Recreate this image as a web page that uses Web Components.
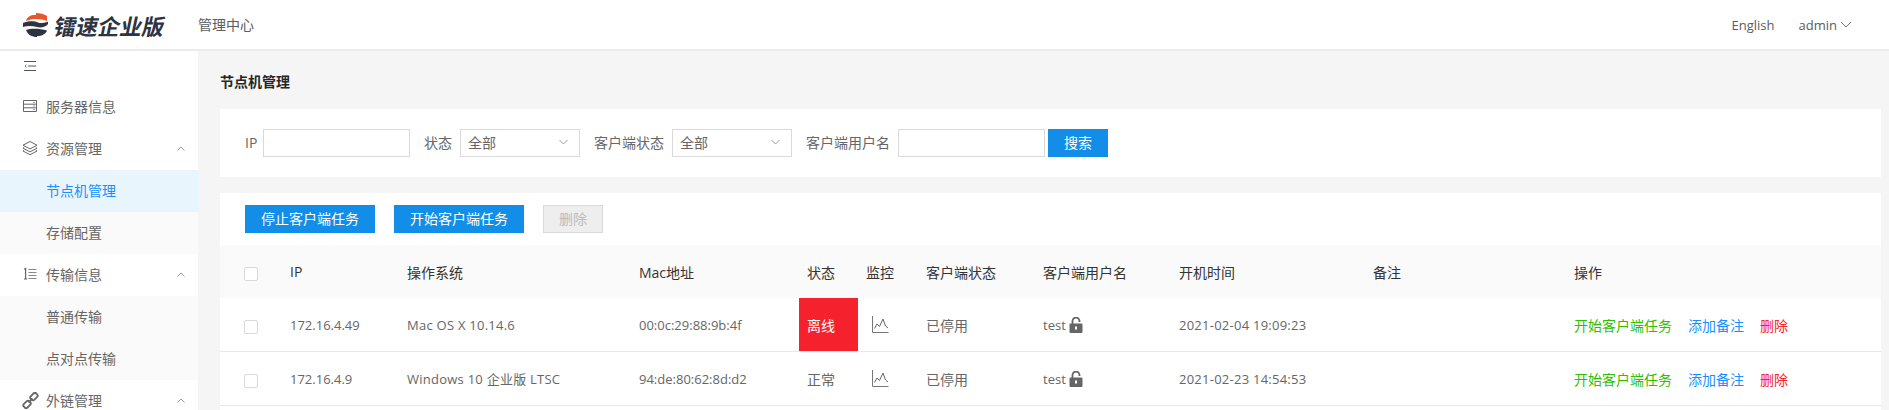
<!DOCTYPE html>
<html lang="zh">
<head>
<meta charset="utf-8">
<title>节点机管理</title>
<style>
  html, body { margin: 0; height: 100%; overflow: hidden; }
  body {
    background: #f5f5f5;
    font-family: "Open Sans", "Noto Sans CJK SC", sans-serif;
    font-size: 14px;
    color: #666;
  }
  #app { display: flex; flex-direction: column; height: 100vh; }
  #body { display: flex; flex: 1; min-height: 0; }
</style>
</head>
<body>
<div id="app">
  <rs-header></rs-header>
  <div id="body">
    <rs-sidebar>
      <rs-collapse></rs-collapse>
      <rs-nav-item icon="server">服务器信息</rs-nav-item>
      <rs-nav-item icon="layers" arrow>资源管理</rs-nav-item>
      <rs-nav-item sub active>节点机管理</rs-nav-item>
      <rs-nav-item sub>存储配置</rs-nav-item>
      <rs-nav-item icon="list" arrow>传输信息</rs-nav-item>
      <rs-nav-item sub>普通传输</rs-nav-item>
      <rs-nav-item sub>点对点传输</rs-nav-item>
      <rs-nav-item icon="link" arrow>外链管理</rs-nav-item>
    </rs-sidebar>
    <rs-page title="节点机管理">
      <rs-filter-bar></rs-filter-bar>
      <rs-node-table>
        <rs-node-row ip="172.16.4.49" os="Mac OS X 10.14.6" mac="00:0c:29:88:9b:4f" status="离线" offline client="已停用" user="test" boot="2021-02-04 19:09:23"></rs-node-row>
        <rs-node-row ip="172.16.4.9" os="Windows 10 企业版 LTSC" mac="94:de:80:62:8d:d2" status="正常" client="已停用" user="test" boot="2021-02-23 14:54:53"></rs-node-row>
      </rs-node-table>
    </rs-page>
  </div>
</div>

<script>
const icons = {
  server: '<svg width="16" height="16" viewBox="0 0 16 16" fill="none" stroke="#666"><path d="M1.5 2.5h13v11h-13zM1.5 6.2h13M1.5 9.8h13"/><path d="M11 4.4h2M11 8h2M11 11.6h2" stroke="#999"/></svg>',
  layers: '<svg width="16" height="16" viewBox="0 0 16 16" fill="none" stroke="#666"><path d="M8 1.5l7 3.7-7 3.7-7-3.7z"/><path d="M2.2 7.4L1 8.2l7 3.7 7-3.7-1.2-.8"/><path d="M2.2 10.2L1 11l7 3.7 7-3.7-1.2-.8"/></svg>',
  list: '<svg width="16" height="16" viewBox="0 0 16 16" fill="none" stroke="#666"><path d="M6.5 3.5h8M6.5 6.5h8M6.5 9.5h8M6.5 12.5h8" stroke="#888"/><path d="M2 3.2L3.6 2.5V13M2 13h3.2" stroke-width="1.2"/></svg>',
  link: '<svg width="17" height="17" viewBox="0 0 17 17" fill="none" stroke="#666" stroke-width="1.8"><rect x="8.2" y="2" width="7.5" height="5" rx="1.6" transform="rotate(-45 12 4.5)"/><rect x="1.3" y="10" width="7.5" height="5" rx="1.6" transform="rotate(-45 5 12.5)"/><path d="M6.5 10.5l4-4"/></svg>'
};

class RsHeader extends HTMLElement {
  constructor() {
    super();
    this.attachShadow({mode: 'open'}).innerHTML = `
      <style>
        :host { display: flex; flex: none; align-items: center; height: 49px; background: #fff; border-bottom: 2px solid #ebebeb; padding: 0 37px 0 23px; color: #5c5c5c; }
        .logo { display: flex; align-items: center; width: 175px; }
        .brand { display: inline-block; margin-left: 7px; font: 700 22px/24px "Noto Sans CJK SC", sans-serif; color: #2d3340; transform: skewX(-12deg); white-space: nowrap; }
        .sp { flex: 1; }
        .center { font-size: 14px; padding-bottom: 2px; }
        .lang, .user { font-size: 13px; }
        .user { display: flex; align-items: center; gap: 3px; margin-left: 24px; }
      </style>
      <div class="logo">
        <svg width="25" height="24" viewBox="23 12 25 24">
          <path fill="#e8562a" d="M26 20C27 15 32 13.5 36 14V12C40 12 44 13 47 15V20C42 17.5 32 17 26 20Z"/>
          <path fill="#2d3340" d="M23 22C28 19.5 35 20 38 21.5C41 22.5 45 22 48 20.5V23C46 26 41 27 37 26C32 24.5 27 24.5 23 26Z"/>
          <path fill="#2d3340" d="M26 29C31 27 40 27.5 47 29.5C46 33 42 35 37 35V36C32 36 28 34 26 29Z"/>
        </svg>
        <span class="brand">镭速企业版</span>
      </div>
      <span class="center">管理中心</span>
      <span class="sp"></span>
      <span class="lang">English</span>
      <span class="user">admin
        <svg width="12" height="8" viewBox="0 0 12 8" fill="none" stroke="#777"><path d="M1 1l5 5 5-5"/></svg>
      </span>`;
  }
}

class RsSidebar extends HTMLElement {
  constructor() {
    super();
    this.attachShadow({mode: 'open'}).innerHTML = `
      <style>:host { display: block; flex: none; width: 198px; background: #fff; }</style>
      <slot></slot>`;
  }
}

class RsCollapse extends HTMLElement {
  constructor() {
    super();
    this.attachShadow({mode: 'open'}).innerHTML = `
      <style>:host { display: flex; align-items: center; height: 35px; padding: 6px 0 12px 24px; box-sizing: border-box; }</style>
      <svg width="12" height="12" viewBox="0 0 12 12" fill="none" stroke="#555"><path d="M0 1.5h12M4 6h8M0 10.5h12"/><path d="M2.5 4.5L1 6l1.5 1.5" stroke="#2f8fdf"/></svg>`;
  }
}

class RsNavItem extends HTMLElement {
  constructor() {
    super();
    const icon = this.getAttribute('icon');
    const arrow = this.hasAttribute('arrow');
    this.attachShadow({mode: 'open'}).innerHTML = `
      <style>
        :host { display: flex; align-items: center; height: 42px; box-sizing: border-box; padding: 0 13px 2px 22px; color: #666; font-size: 14px; }
        :host([sub]) { background: #fafafa; padding-left: 46px; }
        :host([active]) { background: #e9f5fd; color: #1890ff; width: 199px; }
        .ic { display: flex; width: 24px; flex: none; }
        .txt { flex: 1; }
      </style>
      ${icon ? `<span class="ic">${icons[icon]}</span>` : ''}
      <span class="txt"><slot></slot></span>
      ${arrow ? '<svg width="8" height="5" viewBox="0 0 8 5" fill="none" stroke="#999"><path d="M.5 4.5L4 1l3.5 3.5"/></svg>' : ''}`;
  }
}

class RsPage extends HTMLElement {
  constructor() {
    super();
    this.attachShadow({mode: 'open'}).innerHTML = `
      <style>
        :host { display: block; flex: 1; min-width: 0; overflow: hidden; padding: 0 8px 0 22px; }
        h1 { margin: 0; height: 58px; box-sizing: border-box; padding-top: 21px; font: 700 14px/20px "Open Sans", "Noto Sans CJK SC", sans-serif; color: #262626; }
        ::slotted(*) { margin-bottom: 16px; }
      </style>
      <h1>${this.getAttribute('title')}</h1>
      <slot></slot>`;
  }
}

class RsButton extends HTMLElement {
  constructor() {
    super();
    this.attachShadow({mode: 'open'}).innerHTML = `
      <style>
        :host { display: inline-flex; align-items: center; justify-content: center; height: 28px; box-sizing: border-box; padding-bottom: 2px; background: #128ee9; color: #fff; font-size: 14px; white-space: nowrap; }
        :host([disabled]) { background: #eee; border: 1px solid #d9d9d9; color: #bbb; }
      </style>
      <slot></slot>`;
  }
}

class RsField extends HTMLElement {
  constructor() {
    super();
    const options = this.getAttribute('select');
    this.attachShadow({mode: 'open'}).innerHTML = `
      <style>
        :host { display: inline-flex; align-items: center; gap: 8px; font-size: 14px; color: #666; white-space: nowrap; }
        :host([short]) .lbl { width: 10px; }
        .lbl { padding-bottom: 2px; }
        .box { display: flex; align-items: center; justify-content: space-between; height: 28px; box-sizing: border-box; border: 1px solid #d9d9d9; background: #fff; width: 147px; }
        .sel { width: 120px; padding: 0 11px 2px 7px; color: #666; }
      </style>
      <span class="lbl">${this.getAttribute('label')}</span>
      ${options
        ? `<div class="box sel"><span>${options}</span><svg width="9" height="6" viewBox="0 0 9 6" fill="none" stroke="#999"><path d="M.5 1L4.5 5l4-4"/></svg></div>`
        : '<div class="box"></div>'}`;
  }
}

class RsFilterBar extends HTMLElement {
  constructor() {
    super();
    this.attachShadow({mode: 'open'}).innerHTML = `
      <style>
        :host { display: flex; align-items: center; height: 68px; background: #fff; padding-left: 25px; }
        rs-field { margin-right: 14px; }
        rs-field.last { margin-right: 3px; }
        rs-button { width: 60px; }
      </style>
      <rs-field short label="IP"></rs-field>
      <rs-field label="状态" select="全部"></rs-field>
      <rs-field label="客户端状态" select="全部"></rs-field>
      <rs-field class="last" label="客户端用户名"></rs-field>
      <rs-button>搜索</rs-button>`;
  }
}

const tableColumns = '62px 117px 232px 168px 59px 60px 117px 136px 194px 201px 1fr';

class RsNodeTable extends HTMLElement {
  constructor() {
    super();
    this.attachShadow({mode: 'open'}).innerHTML = `
      <style>
        :host { display: block; background: #fff; padding-bottom: 40px; --cols: ${tableColumns}; }
        .tools { display: flex; gap: 19px; padding: 12px 25px; }
        .tools rs-button { width: 130px; }
        .tools rs-button[disabled] { width: 60px; }
        .head { display: grid; grid-template-columns: var(--cols); height: 53px; background: #fafafa; border-radius: 4px 4px 0 0; color: #333; font-size: 14px; }
        .head > div { display: flex; align-items: center; padding: 0 8px; white-space: nowrap; }
        .head > .ck { padding: 5px 0 0 24px; }
        .check { width: 14px; height: 14px; box-sizing: border-box; border: 1px solid #d9d9d9; border-radius: 2px; background: #fff; }
      </style>
      <div class="tools">
        <rs-button>停止客户端任务</rs-button>
        <rs-button>开始客户端任务</rs-button>
        <rs-button disabled>删除</rs-button>
      </div>
      <div class="head">
        <div class="ck"><span class="check"></span></div>
        <div>IP</div><div>操作系统</div><div>Mac地址</div><div>状态</div><div>监控</div>
        <div>客户端状态</div><div>客户端用户名</div><div>开机时间</div><div>备注</div><div>操作</div>
      </div>
      <slot></slot>`;
  }
}

class RsNodeRow extends HTMLElement {
  constructor() {
    super();
    const a = name => this.getAttribute(name);
    this.attachShadow({mode: 'open'}).innerHTML = `
      <style>
        :host { display: grid; grid-template-columns: var(--cols); height: 54px; box-sizing: border-box; border-bottom: 1px solid #e8e8e8; background: #fff; color: #666; font-size: 14px; }
        .c { display: flex; align-items: center; padding: 0 8px; white-space: pre; }
        .c.ck { padding: 5px 0 0 24px; }
        .check { width: 14px; height: 14px; box-sizing: border-box; border: 1px solid #d9d9d9; border-radius: 2px; }
        .l { font-size: 13px; }
        .w { letter-spacing: .25px; }
        .off { background: #f5222d; color: #fff; }
        .mon { padding-left: 14px; }
        .user { gap: 3px; }
        .ops { gap: 16px; }
        .go { color: #2dc000; }
        .note { color: #1890ff; }
        .del { color: #f5222d; }
      </style>
      <div class="c ck"><span class="check"></span></div>
      <div class="c l">${a('ip')}</div>
      <div class="c l w">${a('os')}</div>
      <div class="c l">${a('mac')}</div>
      <div class="c ${this.hasAttribute('offline') ? 'off' : ''}">${a('status')}</div>
      <div class="c mon"><svg width="17" height="17" viewBox="0 0 17 17" fill="none" stroke="#777"><path d="M.5 0v16.5h16" /><path d="M2.5 12.5L5 8l2.5 2.5L11 3l2.5 7 2.5 2" stroke="#666"/></svg></div>
      <div class="c">${a('client')}</div>
      <div class="c l user">${a('user')}<svg width="14" height="16" viewBox="0 0 14 16"><path fill="none" stroke="#666" stroke-width="1.8" d="M3.5 7V4a3.5 3.5 0 0 1 7 0v1"/><path fill="#666" d="M1.5 6.5h11a1 1 0 0 1 1 1V15a1 1 0 0 1-1 1h-11a1 1 0 0 1-1-1V7.5a1 1 0 0 1 1-1z"/><path fill="#fff" d="M6 9.5h2v3H6z"/></svg></div>
      <div class="c l w">${a('boot')}</div>
      <div class="c"></div>
      <div class="c ops"><span class="go">开始客户端任务</span><span class="note">添加备注</span><span class="del">删除</span></div>`;
  }
}

customElements.define('rs-header', RsHeader);
customElements.define('rs-sidebar', RsSidebar);
customElements.define('rs-collapse', RsCollapse);
customElements.define('rs-nav-item', RsNavItem);
customElements.define('rs-page', RsPage);
customElements.define('rs-button', RsButton);
customElements.define('rs-field', RsField);
customElements.define('rs-filter-bar', RsFilterBar);
customElements.define('rs-node-table', RsNodeTable);
customElements.define('rs-node-row', RsNodeRow);
</script>
</body>
</html>
